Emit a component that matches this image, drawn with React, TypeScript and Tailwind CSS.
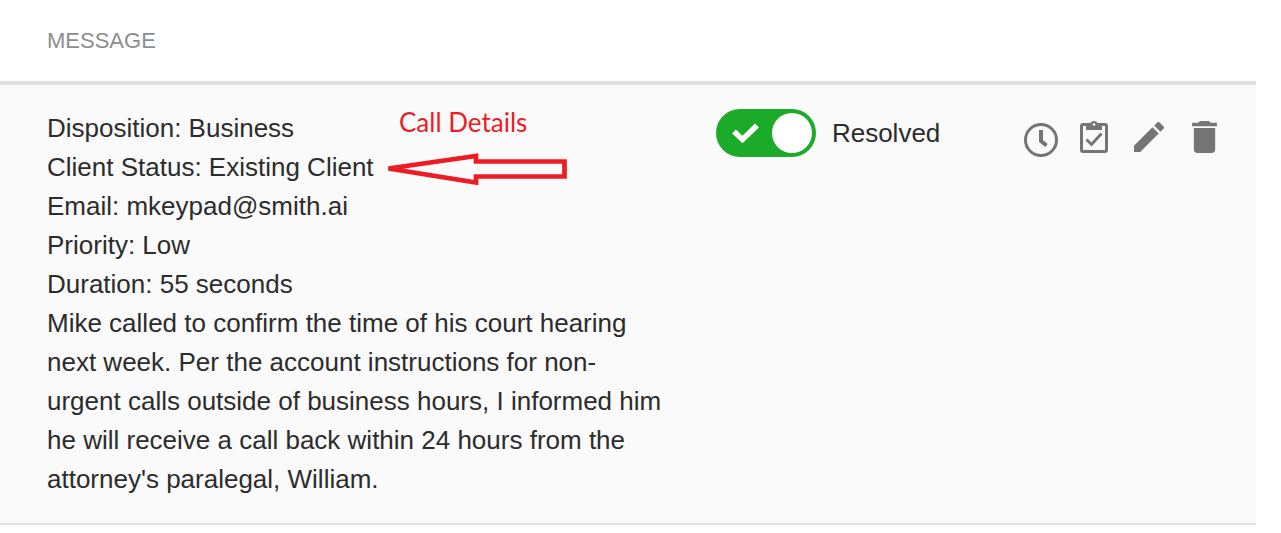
import { useState } from 'react';

const details = [
  'Disposition: Business',
  'Client Status: Existing Client',
  'Email: mkeypad@smith.ai',
  'Priority: Low',
  'Duration: 55 seconds',
];

function ResolvedSwitch() {
  const [resolved, setResolved] = useState(true);
  return (
    <label className="flex w-fit cursor-pointer items-center gap-4">
      <input
        type="checkbox"
        role="switch"
        className="peer sr-only"
        checked={resolved}
        onChange={(e) => setResolved(e.target.checked)}
      />
      <span className="flex h-12 w-[100px] shrink-0 flex-row-reverse items-center justify-between rounded-full bg-gray-400 p-1 peer-checked:flex-row peer-checked:bg-[#1caa29]">
        <svg viewBox="0 0 28 22" className="ml-3 h-[22px] w-7" aria-hidden="true">
          <path d="M2 9.500 10.500 17.500 25 3.500" fill="none" stroke="#fff" strokeWidth="5.500" />
        </svg>
        <span className="size-10 rounded-full bg-white" />
      </span>
      <span>Resolved</span>
    </label>
  );
}

function RowActions() {
  return (
    <div className="flex items-start gap-[22px] pt-3 text-[#757575]">
      <button type="button" aria-label="Snooze" className="mt-0.5 cursor-pointer">
        <svg viewBox="0 0 34 34" className="size-[34px]" fill="none" stroke="currentColor">
          <circle cx="17" cy="17" r="15.500" strokeWidth="3" />
          <path d="M17 7v11l5.500 4.500" strokeWidth="4" />
        </svg>
      </button>
      <button type="button" aria-label="Mark complete" className="cursor-pointer">
        <svg viewBox="0 0 28 32" className="h-8 w-7" fill="none" stroke="currentColor">
          <rect x="1.500" y="3.500" width="25" height="27" rx="1.500" strokeWidth="3" />
          <path d="M6 2h4.500c.5-1.300 1.800-2 3.500-2s3 .7 3.500 2H22v7H6z" fill="currentColor" stroke="none" />
          <circle cx="14" cy="3.500" r="1.300" fill="#fafafa" stroke="none" />
          <path d="M6.500 18.500 11.500 23.500 21.500 12.500" strokeWidth="2.800" />
        </svg>
      </button>
      <button type="button" aria-label="Edit" className="ml-1 cursor-pointer">
        <svg viewBox="3 3 18 18" className="mt-px size-[30px]" fill="currentColor">
          <path d="M3 17.250V21h3.750L17.810 9.940l-3.750-3.750L3 17.250zM20.710 7.040a1 1 0 0 0 0-1.410l-2.340-2.340a1 1 0 0 0-1.410 0l-1.830 1.830 3.750 3.750 1.830-1.830z" />
        </svg>
      </button>
      <button type="button" aria-label="Delete" className="ml-1.5 cursor-pointer">
        <svg viewBox="5 3 14 18" className="h-8 w-[25px]" fill="currentColor">
          <path d="M6 19c0 1.100.9 2 2 2h8c1.100 0 2-.9 2-2V7H6v12zM19 4h-3.500l-1-1h-5l-1 1H5v2h14V4z" />
        </svg>
      </button>
    </div>
  );
}

export default function App() {
  return (
    <main className="bg-white pr-[25px] font-['Liberation_Sans',Arial,sans-serif] text-[26px] leading-[39px] text-[#2c2c2c]">
      <table className="w-full table-fixed border-collapse">
        <colgroup>
          <col className="w-[57%]" />
          <col className="w-[24.5%]" />
          <col />
        </colgroup>
        <thead>
          <tr>
            <th scope="col" colSpan={3} className="pt-6 pb-6 pl-[47px] text-left text-[22px] leading-[33px] font-normal text-[#8e8e8e]">
              MESSAGE
            </th>
          </tr>
        </thead>
        <tbody className="border-t-4 border-b-2 border-[#e0e0e0] bg-[#fafafa]">
          <tr className="align-top">
            <td className="relative py-6 pr-12 pl-[47px]">
              {details.map((line) => (
                <p key={line}>{line}</p>
              ))}
              <p>
                Mike called to confirm the time of his court hearing next week. Per the account
                instructions for non-urgent calls outside of business hours, I informed him he will
                receive a call back within 24 hours from the attorney's paralegal, William.
              </p>
              <div className="pointer-events-none absolute top-6 left-[387px] text-[#ed1c24]">
                <p className="pl-3 font-[Lato,sans-serif] text-[26px] leading-[26px]">Call Details</p>
                <svg viewBox="0 0 180 32" className="mt-[18px] h-8 w-[180px]" fill="none" aria-hidden="true">
                  <path d="M1.500 15.500 89 3V8.500H177.500V23.500H89V29.500Z" stroke="currentColor" strokeWidth="4.700" strokeMiterlimit="3" />
                </svg>
              </div>
            </td>
            <td className="py-6">
              <ResolvedSwitch />
            </td>
            <td className="py-6">
              <RowActions />
            </td>
          </tr>
        </tbody>
      </table>
    </main>
  );
}
